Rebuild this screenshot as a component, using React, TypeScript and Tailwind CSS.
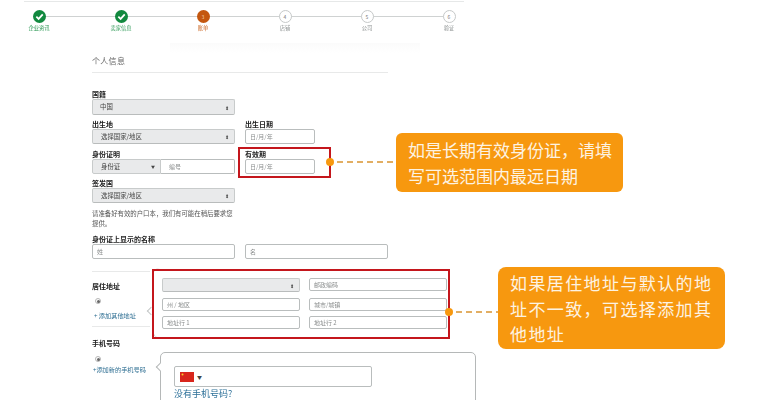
const steps = [
  { label: '企业资讯', state: 'done' },
  { label: '卖家信息', state: 'done' },
  { label: '账单', state: 'active', n: 3 },
  { label: '店铺', state: 'todo', n: 4 },
  { label: '公司', state: 'todo', n: 5 },
  { label: '验证', state: 'todo', n: 6 },
];

const Step = ({ label, state, n }: { label: string; state: string; n?: number }) => {
  const color = state === 'done' ? 'text-[#2f9a57]' : state === 'active' ? 'text-[#c9601a]' : 'text-[#8a8f8f]';
  return (
    <div className="relative flex w-[82px] flex-col items-center">
      {state === 'done' && (
        <div className="flex h-[13px] w-[13px] items-center justify-center rounded-full bg-[#12893f]">
          <svg width="9" height="9" viewBox="0 0 10 10" fill="none" stroke="white" strokeWidth="2">
            <path d="M1.5 5.2 4 7.6 8.6 2.6" />
          </svg>
        </div>
      )}
      {state === 'active' && (
        <div className="flex h-[13px] w-[13px] items-center justify-center rounded-full bg-[#c4570f] text-[5px] text-[#f3c9a0]">{n}</div>
      )}
      {state === 'todo' && (
        <div className="flex h-[13px] w-[13px] items-center justify-center rounded-full border border-[#c6c9c9] bg-white text-[5px] text-[#777]">{n}</div>
      )}
      <div className={`mt-[1px] text-[5.3px] leading-[8px] blur-[0.3px] ${color}`}>{label}</div>
    </div>
  );
};

const Label = ({ children }: { children: string }) => (
  <div className="h-[9px] text-[7px] leading-[9px] font-bold text-[#222] blur-[0.2px]">{children}</div>
);

const Select = ({ text, className }: { text?: string; className: string }) => (
  <div className={`flex items-center justify-between rounded-[2px] border border-[#c8cbcb] border-b-[#b9bcbc] bg-[#e9eaeb] pl-[7px] pr-[5px] text-[6.4px] text-[#444] blur-[0.2px] ${className}`}>
    <span>{text}</span>
    <span className="text-[5px] leading-none">⬍</span>
  </div>
);

const Input = ({ text, className }: { text?: string; className: string }) => (
  <div className={`flex items-center rounded-[2px] border border-[#b9bdbd] bg-white pl-[4px] text-[6px] text-[#8a8d8d] blur-[0.2px] ${className}`}>
    {text}
  </div>
);

const Radio = () => (
  <div className="ml-[2px] flex h-[6px] w-[6px] items-center justify-center rounded-full border border-[#b5b5b5] bg-white">
    <div className="h-[3px] w-[3px] rounded-full bg-[#666]" />
  </div>
);

// dot + dashed connector from a red box to its callout
const Connector = ({ width, className }: { width: number; className: string }) => (
  <div className={`absolute flex items-center ${className}`}>
    <div className="h-[8px] w-[8px] rounded-full bg-[#f7980f]" />
    <svg width={width} height="2" className="ml-[3px]">
      <line x1="0" y1="1" x2={width} y2="1" stroke="#e2ae63" strokeWidth="2" strokeDasharray="6 4" />
    </svg>
  </div>
);

export default function App() {
  return (
    <main className="relative h-[400px] w-[766px] overflow-hidden bg-white font-['Noto_Sans_CJK_SC','Liberation_Sans',sans-serif]">
      {/* top bar + stepper */}
      <div className="ml-[24px] mt-[1px] h-px w-[440px] bg-[#e6e8e8]" />
      <div className="relative ml-[-2px] mt-[8px] flex">
        <div className="absolute left-[41px] top-[6px] h-px w-[409px] bg-[#cfd2d2]" />
        {steps.map((s) => (
          <Step key={s.label} label={s.label} state={s.state} n={s.n} />
        ))}
      </div>
      <div className="absolute left-[170px] top-[43px] h-[10px] w-[250px] bg-gradient-to-b from-[#fbfbfb] to-white" />

      {/* form */}
      <div className="relative ml-[92px] mt-[22px] w-[384px]">
        <div className="w-[296px] border-b border-[#e8e9e9] pb-[5px] text-[8px] leading-[13px] tracking-[0.3px] text-[#666] blur-[0.2px]">
          个人信息
        </div>

        <div className="mt-[17px]"><Label>国籍</Label></div>
        <Select text="中国" className="h-[16px] w-[143px]" />

        <div className="mt-[5px] flex gap-[10px]">
          <div className="w-[143px]">
            <Label>出生地</Label>
            <Select text="选择国家/地区" className="h-[15px] pl-[8px]" />
          </div>
          <div>
            <Label>出生日期</Label>
            <Input text="日/月/年" className="h-[15px] w-[70px]" />
          </div>
        </div>

        <div className="mt-[6px] flex gap-[10px]">
          <div className="w-[143px]">
            <Label>身份证明</Label>
            <div className="flex h-[15px]">
              <div className="flex w-[69px] items-center justify-between rounded-l-[2px] border border-[#c8cbcb] bg-[#e9eaeb] pl-[8px] pr-[5px] text-[6.4px] text-[#444] blur-[0.2px]">
                <span>身份证</span>
                <span className="text-[4px] leading-none">▼</span>
              </div>
              <Input text="编号" className="flex-1 rounded-l-none border-l-0 pl-[8px]" />
            </div>
          </div>
          <div>
            <Label>有效期</Label>
            <Input text="日/月/年" className="h-[15px] w-[70px]" />
          </div>
        </div>

        <div className="mt-[5px]"><Label>签发国</Label></div>
        <Select text="选择国家/地区" className="h-[15px] w-[143px] pl-[8px]" />

        <p className="mt-[6px] w-[143px] text-[6.4px] leading-[9.5px] text-[#555] blur-[0.2px]">
          请准备好有效的户口本，我们有可能在稍后要求您提供。
        </p>

        <div className="mt-[7px]"><Label>身份证上显示的名称</Label></div>
        <div className="flex gap-[10px]">
          <Input text="姓" className="h-[15px] w-[143px]" />
          <Input text="名" className="h-[15px] w-[143px]" />
        </div>

        {/* address */}
        <div className="mt-[9px] flex">
          <div className="w-[60px] pt-[3px]">
            <div className="w-[58px] border-t border-[#e8e9e9] pt-[10px]"><Label>居住地址</Label></div>
            <div className="ml-[1px] mt-[7px]"><Radio /></div>
            <div className="ml-[2px] mt-[7px] text-[6.2px] leading-[9px] text-[#2f6f93] blur-[0.2px]">+ 添加其他地址</div>
            <div className="mt-[6px] w-[58px] border-t border-[#e8e9e9]" />
          </div>
          <div className="relative grid h-[70px] w-[298px] grid-cols-[138px_138px] content-start gap-x-[9px] rounded-l-[8px] border-l border-[#c4c7c7] pl-[9px] pt-[10px]">
            <div className="absolute left-[-5px] top-[40px] h-[6px] w-[6px] rotate-45 border-b border-l border-[#c4c7c7] bg-white" />
            <Select className="h-[14px]" />
            <Input text="邮政编码" className="h-[13px]" />
            <Input text="州 / 地区" className="mt-[6px] h-[13px]" />
            <Input text="城市/城镇" className="mt-[6px] h-[13px]" />
            <Input text="地址行 1" className="mt-[5px] h-[13px]" />
            <Input text="地址行 2" className="mt-[5px] h-[13px]" />
          </div>
        </div>

        {/* phone */}
        <div className="flex">
          <div className="w-[68px] pt-[1px]">
            <Label>手机号码</Label>
            <div className="ml-[1px] mt-[8px]"><Radio /></div>
            <div className="ml-[1px] mt-[3px] text-[6.2px] leading-[9px] text-[#2f6f93] blur-[0.2px]">+添加新的手机号码</div>
          </div>
          <div className="relative mt-[14px] h-[80px] w-[316px] rounded-[5px] border border-[#b5b8b8] pl-[13px] pt-[13px]">
            <div className="absolute left-[-4px] top-[11px] h-[6px] w-[6px] rotate-45 border-b border-l border-[#b5b8b8] bg-white" />
            <div className="flex h-[21px] w-[198px] items-center rounded-[2px] border border-[#b9bdbd] pl-[5px]">
              <svg width="14" height="10" viewBox="0 0 14 10">
                <rect width="14" height="10" fill="#d8261c" />
                <circle cx="2.5" cy="2.5" r="1" fill="#f6d22c" />
              </svg>
              <span className="ml-[3px] text-[5px] text-[#444]">▼</span>
            </div>
            <div className="mt-[1px] text-[9px] leading-[11px] text-[#2b6f98] blur-[0.2px]">没有手机号码?</div>
          </div>
        </div>
      </div>

      {/* annotations */}
      <div className="absolute left-[238px] top-[147px] h-[31px] w-[93px] border-2 border-[#c4161c]" />
      <div className="absolute left-[152px] top-[269px] h-[70px] w-[298px] border-2 border-[#c4161c]" />

      <Connector width={58} className="left-[326px] top-[158px]" />
      <Connector width={42} className="left-[445px] top-[308px]" />

      <div className="absolute left-[396px] top-[133px] h-[59px] w-[227px] rounded-[6px] bg-[#f7980f] pl-[12px] pt-[4px] text-[17px] leading-[25.5px] text-[#fdf3e2]">
        如是长期有效身份证，请填<br />写可选范围内最远日期
      </div>
      <div className="absolute left-[498px] top-[267px] h-[82px] w-[227px] rounded-[8px] bg-[#f7980f] pl-[12px] pt-[3px] text-[17px] leading-[25.5px] tracking-[1.4px] text-[#fdf3e2]">
        如果居住地址与默认的地<br />址不一致，可选择添加其<br />他地址
      </div>
    </main>
  );
}
